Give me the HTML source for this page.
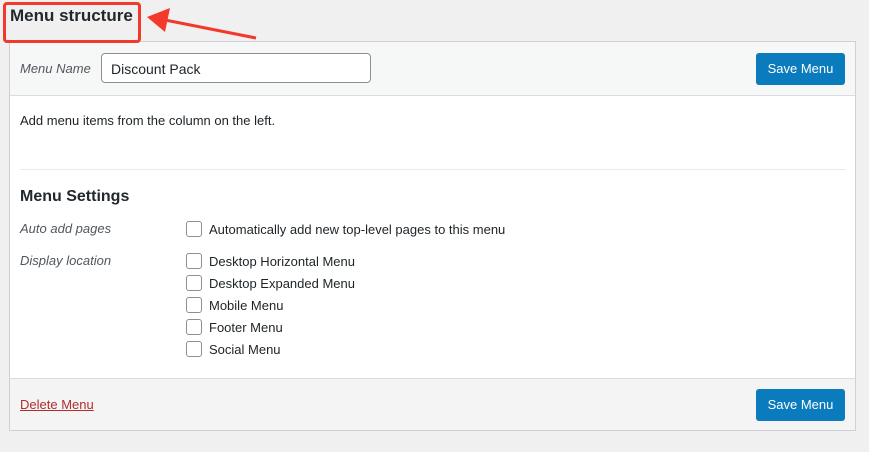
<!DOCTYPE html>
<html><head><style>
body{margin:0;width:869px;height:452px;background:#f0f0f1;font-family:"Liberation Sans",sans-serif;color:#1d2327;position:relative;overflow:hidden;font-size:13px}
.abs{position:absolute}
.panel{left:9px;top:41px;width:845px;height:388px;border:1px solid #d0d0d4;background:#fff;overflow:hidden}
.hdr{left:0;top:0;width:845px;height:53px;background:#f6f7f7;border-bottom:1px solid #dcdcde}
.ftr{left:0;top:336px;width:845px;height:52px;background:#f4f4f4;border-top:1px solid #dcdcde}
.btn{background:#0a7bbd;color:#fff;border-radius:3px;width:89px;height:32px;line-height:32px;text-align:center;font-size:13px}
.cb{width:14px;height:14px;border:1px solid #8c8f94;border-radius:3px;background:#fff}
.lbl{font-style:italic;color:#50575e}
</style></head><body>
<div class="abs panel">
 <div class="abs hdr">
  <div class="abs lbl" style="left:10px;top:19px">Menu Name</div>
  <div class="abs" style="left:91px;top:11px;width:268px;height:28px;border:1px solid #8c8f94;border-radius:4px;background:#fff"><span class="abs" style="left:9px;top:7px;font-size:14px">Discount Pack</span></div>
  <div class="abs btn" style="left:746px;top:11px">Save Menu</div>
 </div>
 <div class="abs" style="left:10px;top:71px">Add menu items from the column on the left.</div>
 <div class="abs" style="left:10px;top:127px;width:826px;border-top:1px solid #eaeaea"></div>
 <div class="abs" style="left:10px;top:146px;font-size:16px;font-weight:bold;color:#23282d">Menu Settings</div>
 <div class="abs lbl" style="left:10px;top:179px">Auto add pages</div>
 <div class="abs lbl" style="left:10px;top:211px">Display location</div>
 <div class="abs cb" style="left:176px;top:179px"></div><div class="abs" style="left:199px;top:180px">Automatically add new top-level pages to this menu</div>
 <div class="abs cb" style="left:176px;top:211px"></div><div class="abs" style="left:199px;top:212px">Desktop Horizontal Menu</div>
 <div class="abs cb" style="left:176px;top:233px"></div><div class="abs" style="left:199px;top:234px">Desktop Expanded Menu</div>
 <div class="abs cb" style="left:176px;top:255px"></div><div class="abs" style="left:199px;top:256px">Mobile Menu</div>
 <div class="abs cb" style="left:176px;top:277px"></div><div class="abs" style="left:199px;top:278px">Footer Menu</div>
 <div class="abs cb" style="left:176px;top:299px"></div><div class="abs" style="left:199px;top:300px">Social Menu</div>
 <div class="abs ftr">
  <div class="abs" style="left:10px;top:18px;color:#b32d2e;text-decoration:underline">Delete Menu</div>
  <div class="abs btn" style="left:746px;top:10px">Save Menu</div>
 </div>
</div>
<div class="abs" style="left:3px;top:2px;width:132px;height:35px;border:3px solid #f2392b;border-radius:4px"></div>
<div class="abs" style="left:10px;top:6px;font-size:17px;font-weight:bold;color:#23282d">Menu structure</div>
<svg class="abs" style="left:0;top:0" width="869" height="60"><line x1="256" y1="38" x2="160" y2="19" stroke="#f2392b" stroke-width="3"/><polygon points="147,17 170,8 165,32" fill="#f2392b"/></svg>
</body></html>
